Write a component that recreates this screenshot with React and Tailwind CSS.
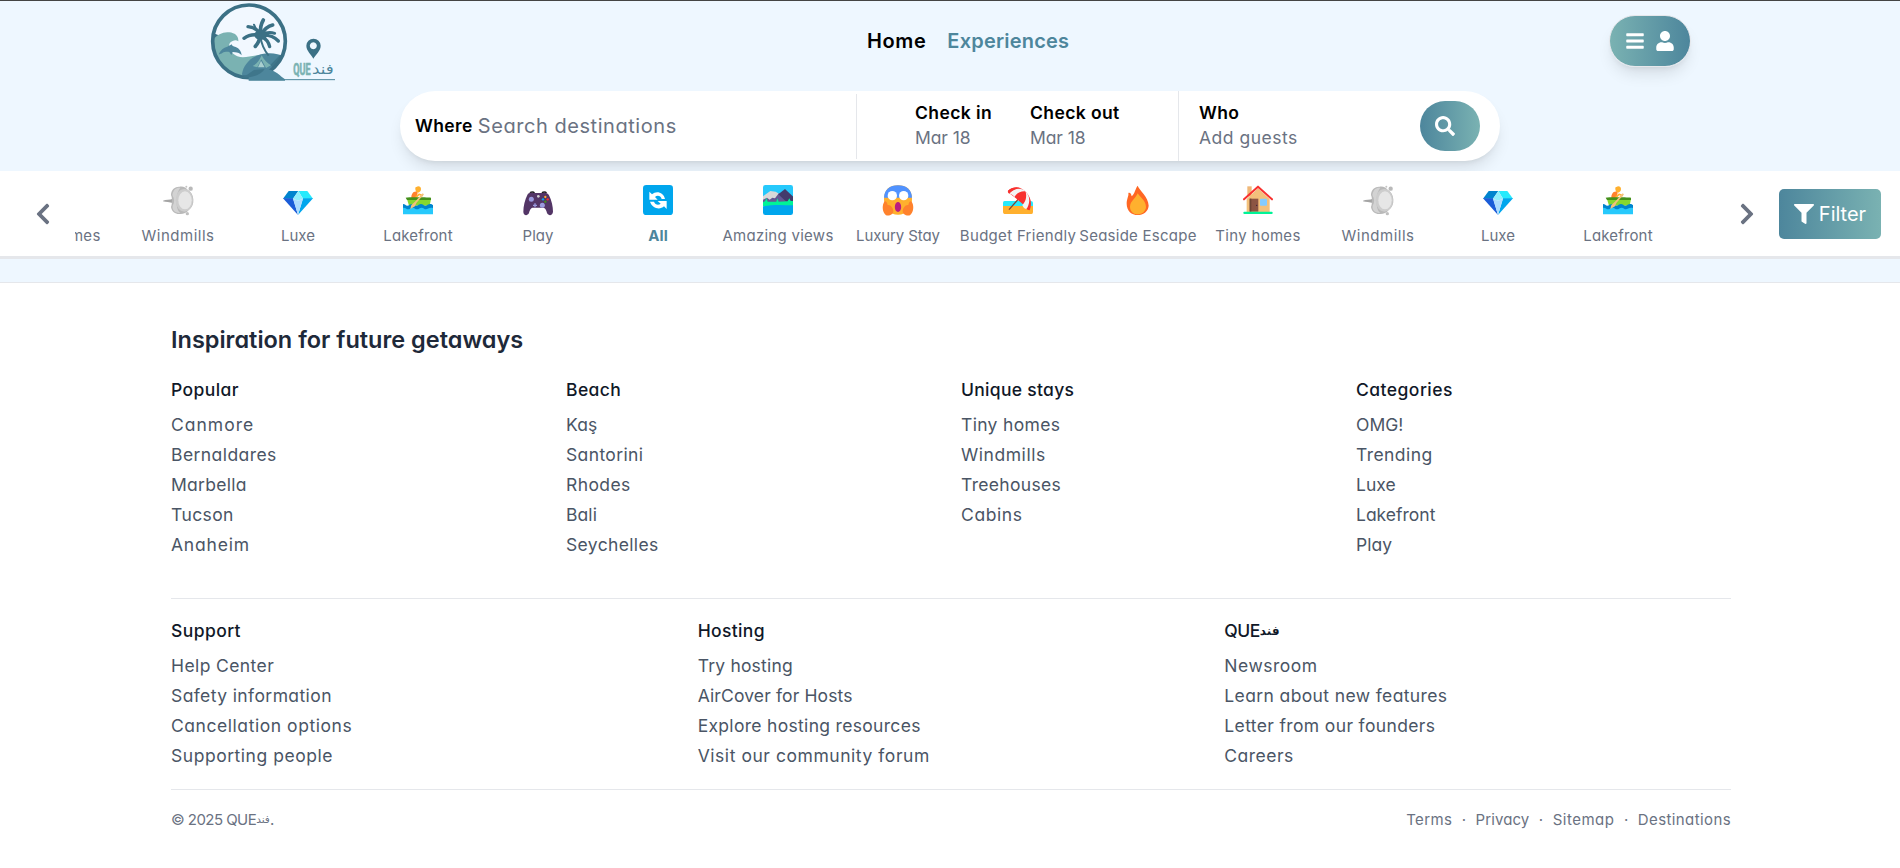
import React from "react";
import { FaBars, FaUser, FaSearch, FaFilter, FaChevronLeft, FaChevronRight } from "react-icons/fa";

function Logo() {
  return (
    <svg viewBox="0 0 510 270" className="h-[90px] w-[170px] shrink-0">
      <defs>
        <clipPath id="disc">
          <circle cx="177" cy="124" r="108" />
        </clipPath>
      </defs>
      <circle cx="177" cy="124" r="108" fill="#f2f8ff" />
      <g clipPath="url(#disc)">
        <path d="M60 96 L90 107 L64 134Z" fill="#3b7085" />
        <path
          d="M60 130 C75 108 95 94 118 97 C135 99 146 108 145 124 C138 118 128 121 120 128 C112 140 122 160 142 169 C166 178 195 162 225 166 L260 200 L230 240 L130 240 L60 190Z"
          fill="#7ab2b2"
        />
        <path
          d="M156 222 C160 196 180 172 212 163 C240 156 268 160 292 174 L280 210 L240 244 L160 240Z"
          fill="#4d869c"
        />
        <path d="M240 196 L270 165 L290 180 L262 212Z" fill="#3f768b" />
        <path d="M215 166 C222 180 232 190 243 196 L228 204 L214 178 L202 202 L188 198 C200 192 208 182 215 166Z" fill="#7ab2b2" />
        <path d="M213 182 L224 202 L204 202Z" fill="#a9cfcf" />
      </g>
      <circle cx="177" cy="124" r="109" fill="none" stroke="#3b7085" strokeWidth="11" />
      <path
        d="M86 163 C92 150 100 143 112 140 C117 138 120 136 125 133 C126 138 130 139 137 141 C148 145 154 154 155 166 C150 160 143 157 135 157 L128 156 L124 165 L118 156 C110 155 102 156 98 158 C94 161 90 162 86 163Z"
        fill="#4d869c"
      />
      <path d="M211 108 C214 133 222 150 236 167" fill="none" stroke="#3b7085" strokeWidth="6" />
      <g fill="none" stroke="#3b7085" strokeLinecap="round">
        <path d="M211 102 C202 88 190 81 174 80" strokeWidth="10" />
        <path d="M212 100 C210 84 213 72 220 60" strokeWidth="11" />
        <path d="M214 102 C224 86 236 78 248 75" strokeWidth="11" />
        <path d="M214 104 C228 97 242 96 254 100" strokeWidth="9" />
        <path d="M214 106 C234 104 254 112 265 123" strokeWidth="10" />
        <path d="M213 108 C228 116 236 126 239 140" strokeWidth="10" />
        <path d="M210 108 C208 122 203 132 196 139" strokeWidth="11" />
        <path d="M209 106 C192 102 174 106 162 115" strokeWidth="10" />
        <path d="M210 100 C200 94 196 84 192 74" strokeWidth="6" />
      </g>
      <ellipse cx="212" cy="105" rx="19" ry="15" fill="#3b7085" />
      <path d="M176 238 C176 226 180 216 192 210 C218 202 246 206 262 220 C272 228 278 233 285 238 L285 242 L176 242Z" fill="#4d869c" />
      <path d="M150 234 C178 236 214 226 224 207 L192 210 C178 220 168 228 150 234Z" fill="#3f768b" />
      <path d="M178 239 H435" stroke="#4d869c" strokeWidth="3" />
      <path
        fillRule="evenodd"
        d="M370 176 C364 163 349 153 349 137 A21.500 21 0 0 1 392 137 C392 153 377 163 370 176Z M370 127 a10.500 10.500 0 1 0 0.010 0Z"
        fill="#3b7085"
      />
      <text
        x="310"
        y="225"
        textLength="52"
        lengthAdjust="spacingAndGlyphs"
        fill="#7ab2b2"
        stroke="#7ab2b2"
        strokeWidth="2"
        className="font-['Roboto','Liberation_Sans',sans-serif] text-[49px] font-bold"
      >
        QUE
      </text>
      <text
        x="366"
        y="222"
        textLength="65"
        lengthAdjust="spacingAndGlyphs"
        fill="#4d869c"
        className="font-['DejaVu_Sans',sans-serif] text-[44px]"
      >
        فند
      </text>
    </svg>
  );
}

function Wind() {
  return (
    <>
      <path d="M0 47 C8 43 20 45 30 41 V54 C20 52 8 51 0 49Z" fill="#a5a5a5" />
      <path d="M24 30 C24 12 38 4 50 5 C60 3 70 8 75 16 C94 24 98 62 78 74 C70 84 60 88 50 87 C38 88 26 80 24 66 C28 58 28 38 24 30Z" fill="#b9b9b9" />
      <path d="M28 30 C32 12 42 7 52 9 C40 20 34 70 52 84 C38 84 26 76 29 62 C35 52 35 42 28 30Z" fill="#d3d3d3" />
      <ellipse cx="64" cy="46" rx="26" ry="34" fill="#cdcdcd" />
      <ellipse cx="66" cy="46" rx="20" ry="27" fill="#e6e6e6" />
      <circle cx="83" cy="11" r="6.500" fill="#b9b9b9" />
      <circle cx="70" cy="5" r="3" fill="#c5c5c5" />
      <circle cx="73" cy="86" r="5" fill="#c0c0c0" />
    </>
  );
}

function Gem() {
  return (
    <>
      <path d="M17 18 H46 L30 41 H0Z" fill="#0084ce" />
      <path d="M46 18 H73 L90 41 H60Z" fill="#26eafc" />
      <path d="M0 40 H30 L45 90Z" fill="#1b5cd8" />
      <path d="M90 40 H60 L45 90Z" fill="#00a6ed" />
      <path d="M46 18 L60 41 L45 47 L30 41Z" fill="#8feffc" />
      <path d="M30 41 L45 47 L60 41 L45 90Z" fill="#aedcff" />
    </>
  );
}

function Rower() {
  return (
    <>
      <path d="M40 20 C36 14 36 4 40 6 C46 2 54 4 54 12 C54 18 50 23 45 23Z" fill="#ffb02e" />
      <path d="M25 40 C24 26 32 17 42 20 C46 24 42 32 38 40Z" fill="#ff822d" />
      <path d="M38 38 L48 28 L60 32" stroke="#ffb02e" strokeWidth="5" fill="none" strokeLinejoin="round" />
      <path d="M12 42 H84 L80 62 H18Z" fill="#86d72f" />
      <path d="M8 38 C20 36 70 37 84 38 V45 H12Z" fill="#44911b" />
      <path d="M0 57 C6 57 8 62 13 62 S22 57 27 57 35 62 40 62 49 57 54 57 62 62 67 62 76 57 81 57 87 59 90 60 V75 H0Z" fill="#0084ce" />
      <path d="M0 68 C8 67 10 73 15 73 S24 68 29 68 37 73 42 73 51 68 56 68 64 73 69 73 78 66 90 69 V88 H0Z" fill="#26c9fc" />
      <path d="M63 28 L40 54 L36 64 L22 72 L25 60 L36 50 L59 25Z" fill="#f3c07b" />
    </>
  );
}

function Pad() {
  return (
    <>
      <path d="M22 24 C22 20 32 20 34 24 M58 24 C58 20 68 20 70 24" stroke="#1c1c1c" strokeWidth="5" fill="none" />
      <path d="M13 30 C16 22 26 23 32 24 H60 C68 22 75 24 78 31 C86 46 90 66 90 80 C89 92 77 94 72 84 C70 76 68 70 62 68 H28 C22 70 20 76 18 84 C13 94 1 92 1 80 C1 64 6 44 13 30Z" fill="#533566" />
      <circle cx="25" cy="43" r="7.500" fill="#9b9ade" />
      <circle cx="58" cy="61" r="7.500" fill="#9b9ade" />
      <path d="M36 55 V67 M30 61 H42" stroke="#9b9ade" strokeWidth="4" />
      <circle cx="46" cy="34" r="4" fill="#d3d3d3" />
      <circle cx="67" cy="36" r="3.500" fill="#ffb02e" />
      <circle cx="74" cy="43" r="3.500" fill="#f8312f" />
      <circle cx="60" cy="43" r="3.500" fill="#00a6ed" />
      <circle cx="67" cy="50" r="3.500" fill="#44911b" />
    </>
  );
}

function Arrows() {
  return (
    <>
      <rect width="90" height="90" rx="10" fill="#00a6ed" />
      <path d="M19 20 L27 28 C40 16 62 22 66 42 H56 C53 31 42 30 36 36 L44 44 H19Z" fill="#fff" />
      <path d="M71 72 L63 64 C50 76 28 70 21 50 H33 C36 60 47 61 53 56 L44 48 H71Z" fill="#fff" />
    </>
  );
}

function Park() {
  return (
    <>
      <clipPath id="park">
        <rect width="90" height="90" rx="7" />
      </clipPath>
      <g clipPath="url(#park)">
        <rect width="90" height="60" fill="#26c9fc" />
        <path d="M0 34 L22 18 L38 20 L54 30 V55 H0Z" fill="#d9d9d9" />
        <path d="M0 44 L12 38 L20 44 L28 38 L36 40 L48 24 L78 55 H0Z" fill="#635994" />
        <path d="M66 12 L92 36 V50 H70 L46 28Z" fill="#433b6b" />
        <path d="M0 52 L7 48 L10 38 L14 50 L40 50 L43 40 L47 50 L74 49 L79 40 L83 48 H90 V64 H0Z" fill="#00f397" />
        <path d="M0 64 C30 58 60 60 90 61 V90 H0Z" fill="#00a6ed" />
      </g>
    </>
  );
}

function Scream() {
  return (
    <>
      <path d="M3 42 C3 14 20 1 45 1 C70 1 87 14 87 42 C87 72 70 89 45 89 S3 72 3 42Z" fill="#ffb02e" />
      <path d="M3 38 C4 14 20 1 45 1 S86 14 87 38Z" fill="#5092ff" />
      <circle cx="28" cy="32" r="14" fill="#fff" />
      <circle cx="62" cy="32" r="14" fill="#fff" />
      <ellipse cx="45" cy="66" rx="9.500" ry="15" fill="#bb1d80" />
      <path d="M2 54 C6 44 12 50 14 60 C22 58 30 68 31 78 C31 88 20 94 9 91 C-2 82 -3 64 2 54Z" fill="#ff822d" />
      <path d="M88 54 C84 44 78 50 76 60 C68 58 60 68 59 78 C59 88 70 94 81 91 C92 82 93 64 88 54Z" fill="#ff822d" />
    </>
  );
}

function Beach() {
  return (
    <>
      <path d="M0 54 C0 49 3 48 8 48 H82 C88 48 90 50 90 56 V66 H0Z" fill="#26eafc" />
      <path d="M0 63 H90 V80 C90 86 87 87 82 87 H8 C2 87 0 85 0 80Z" fill="#ffb02e" />
      <path d="M50 38 L18 74" stroke="#7d4533" strokeWidth="4" />
      <path d="M15 17 C32 2 54 6 68 20 C84 36 88 56 80 76 C76 76 72 73 68 70 L60 58 L34 36 L18 24Z" fill="#f8312f" />
      <path d="M67 19 C50 4 30 14 17 25 C22 26 30 30 34 36 C42 24 52 18 67 19Z" fill="#f4f4f4" />
      <path d="M15 17 C28 6 42 5 52 9 C38 10 26 18 19 26 C15 24 14 20 15 17Z" fill="#f8312f" />
      <path d="M68 20 C84 34 80 60 70 72 C66 72 60 68 58 60 C68 50 72 36 68 20Z" fill="#f4f4f4" />
    </>
  );
}

function Fire() {
  return (
    <>
      <path d="M44 2 C50 18 76 34 77 62 C76 80 60 90 44 90 C26 90 11 78 11 56 C11 42 18 32 16 24 C22 22 25 28 26 34 C36 26 36 12 44 2Z" fill="#ff6723" />
      <path d="M44 25 C52 38 68 46 69 66 C68 80 56 88 45 88 C32 88 21 80 21 65 C22 48 38 40 44 25Z" fill="#ffb02e" />
    </>
  );
}

function House() {
  return (
    <>
      <rect x="13" y="4" width="13" height="30" fill="#f0b878" />
      <path d="M45 10 L80 42 V82 H11 V42Z" fill="#f3c07b" />
      <path d="M3 43 L45 5 L87 43" fill="none" stroke="#f8312f" strokeWidth="6" strokeLinecap="round" strokeLinejoin="round" />
      <rect x="20" y="41" width="26" height="39" fill="#8c5543" />
      <rect x="20" y="41" width="5" height="39" fill="#6d4534" />
      <circle cx="41" cy="61" r="2" fill="#321b41" />
      <rect x="51" y="41" width="21" height="21" rx="2" fill="#83cbff" />
      <rect x="1" y="80" width="88" height="7" rx="3" fill="#00f397" />
    </>
  );
}

const categories = [
  ["Tiny homes", House, "tracking-[0.3px]"],
  ["Windmills", Wind, "tracking-[0.5px]"],
  ["Luxe", Gem, ""],
  ["Lakefront", Rower, "tracking-[0.15px]"],
  ["Play", Pad, ""],
  ["All", Arrows, "tracking-[0.1px]"],
  ["Amazing views", Park, "tracking-[0.28px]"],
  ["Luxury Stay", Scream, "tracking-[-0.1px]"],
  ["Budget Friendly", Beach, "tracking-[0.3px]"],
  ["Seaside Escape", Fire, "tracking-[0.25px]"],
  ["Tiny homes", House, "tracking-[0.3px]"],
  ["Windmills", Wind, "tracking-[0.5px]"],
  ["Luxe", Gem, ""],
  ["Lakefront", Rower, "tracking-[0.15px]"],
];

const getaways = [
  {
    title: ["Popular", "tracking-[0.43px]"],
    links: [
      ["Canmore", "tracking-[1px]"],
      ["Bernaldares", "tracking-[0.43px]"],
      ["Marbella", "tracking-[0.27px]"],
      ["Tucson", "tracking-[0.4px]"],
      ["Anaheim", "tracking-[0.8px]"],
    ],
  },
  {
    title: ["Beach", "tracking-[0.4px]"],
    links: [
      ["Kaş", "tracking-[0.1px]"],
      ["Santorini", "tracking-[0.37px]"],
      ["Rhodes", "tracking-[0.4px]"],
      ["Bali", "tracking-[0.1px]"],
      ["Seychelles", "tracking-[0.35px]"],
    ],
  },
  {
    title: ["Unique stays", "tracking-[0.3px]"],
    links: [
      ["Tiny homes", "tracking-[0.33px]"],
      ["Windmills", "tracking-[0.55px]"],
      ["Treehouses", "tracking-[0.33px]"],
      ["Cabins", "tracking-[0.6px]"],
    ],
  },
  {
    title: ["Categories", "tracking-[0.46px]"],
    links: [
      ["OMG!", ""],
      ["Trending", "tracking-[0.43px]"],
      ["Luxe", ""],
      ["Lakefront", ""],
      ["Play", ""],
    ],
  },
];

const Brand = ({ className }) => (
  <>
    QUE<span className={className}>فند</span>
  </>
);

const company = [
  {
    title: ["Support", "tracking-[0.42px]"],
    links: [
      ["Help Center", "tracking-[0.4px]"],
      ["Safety information", "tracking-[0.4px]"],
      ["Cancellation options", "tracking-[0.55px]"],
      ["Supporting people", "tracking-[0.53px]"],
    ],
  },
  {
    title: ["Hosting", "tracking-[0.35px]"],
    links: [
      ["Try hosting", "tracking-[0.2px]"],
      ["AirCover for Hosts", "tracking-[0.13px]"],
      ["Explore hosting resources", "tracking-[0.31px]"],
      ["Visit our community forum", "tracking-[0.55px]"],
    ],
  },
  {
    title: [
      <Brand
        key="brand"
        className="align-[2px] font-['DejaVu_Sans',sans-serif] text-[12px] leading-none font-bold tracking-normal"
      />,
      "tracking-[-0.5px]",
    ],
    links: [
      ["Newsroom", "tracking-[0.5px]"],
      ["Learn about new features", "tracking-[0.38px]"],
      ["Letter from our founders", "tracking-[0.36px]"],
      ["Careers", "tracking-[0.5px]"],
    ],
  },
];

function LinkColumn({ title, links }) {
  return (
    <div>
      <h3 className={"h-[30px] text-[17.5px] leading-[30px] font-medium text-gray-900 " + title[1]}>{title[0]}</h3>
      <ul className="mt-[5px] text-[17.5px] leading-[30px] text-gray-600">
        {links.map(([label, tracking]) => (
          <li key={label} className={"h-[30px] " + tracking}>
            {label}
          </li>
        ))}
      </ul>
    </div>
  );
}

export default function App() {
  return (
    <div className="h-[868px] w-[1900px] overflow-hidden bg-white font-['Inter','Open_Sans',sans-serif] [font-feature-settings:'cv11']">
      <header className="h-[171px] border-t border-[#444] bg-[#eef7ff]">
        <div className="-mt-px flex h-[91px] items-start pl-[190px]">
          <Logo />
          <nav className="ml-[507px] flex gap-[21px] pt-[26px] text-[20px] leading-[30px] font-semibold">
            <a className="tracking-[0.6px] text-black">Home</a>
            <a className="tracking-[0.2px] text-[#4d869c]">Experiences</a>
          </nav>
          <button className="mt-[15px] mr-[209px] ml-auto flex h-[52px] w-[82px] items-center justify-center gap-[10px] rounded-full border border-gray-200 bg-linear-to-r from-[#7ab2b2] to-[#4d869c] text-white shadow-lg">
            <FaBars className="size-5" />
            <FaUser className="size-5" />
          </button>
        </div>
        <div className="mx-auto flex h-[70px] w-[1100px] items-center rounded-full bg-white shadow-lg">
          <div className="flex h-[65px] w-[457px] items-center gap-[5px] border-r border-gray-200 pl-[15px]">
            <span className="text-[17.5px] font-semibold tracking-[0.4px] text-black">Where</span>
            <span className="text-[20px] tracking-[0.55px] text-gray-500">Search destinations</span>
          </div>
          <div className="flex h-full w-[322px] gap-[38px] border-r border-gray-200 pt-[9px] pl-[58px] text-[17.5px] leading-[25px]">
            <div>
              <p className="font-semibold tracking-[0.4px] text-black">Check in</p>
              <p className="tracking-[-0.1px] text-gray-500">Mar 18</p>
            </div>
            <div>
              <p className="font-semibold tracking-[0.4px] text-black">Check out</p>
              <p className="tracking-[-0.1px] text-gray-500">Mar 18</p>
            </div>
          </div>
          <div className="h-full pt-[9px] pl-5 text-[17.5px] leading-[25px]">
            <p className="font-semibold tracking-[0.4px] text-black">Who</p>
            <p className="tracking-[0.5px] text-gray-500">Add guests</p>
          </div>
          <button className="mr-5 ml-auto flex h-[50px] w-[60px] items-center rounded-full bg-linear-to-r from-[#4d869c] to-[#7ab2b2] pl-[15px] text-white">
            <FaSearch className="size-5" />
          </button>
        </div>
      </header>

      <section className="flex h-[88px] items-center border-b-[3px] border-gray-200 bg-white">
        <div className="flex w-[75px] shrink-0 items-center pl-[31px] text-gray-500">
          <FaChevronLeft className="size-6" />
        </div>
        <div className="flex h-full w-[1640px] overflow-hidden">
          {categories.map(([name, Art, tracking], i) => (
            <div key={i} className={"flex w-[120px] shrink-0 flex-col items-center pt-[14px] " + (i === 0 ? "-ml-[77px]" : "")}>
              <svg viewBox="0 0 90 90" className="size-[30px] overflow-visible">
                <Art />
              </svg>
              <span
                className={
                  "mt-[9px] text-[15px] leading-6 whitespace-nowrap " +
                  tracking +
                  (name === "All" ? " font-bold text-[#4d869c]" : " text-gray-500")
                }
              >
                {name}
              </span>
            </div>
          ))}
        </div>
        <FaChevronRight className="ml-5 size-6 text-gray-500" />
        <button className="mr-[19px] ml-auto flex h-[50px] w-[102px] items-center justify-center gap-[5px] rounded-[5px] bg-linear-to-r from-[#4d869c] to-[#7ab2b2] text-[20px] text-white">
          <FaFilter className="size-5" />
          Filter
        </button>
      </section>

      <div className="h-6 border-b border-gray-200 bg-[#eef7ff]" />

      <footer className="ml-[171px] w-[1560px] pt-[41px]">
        <h2 className="text-[23.5px] leading-[32px] font-semibold text-gray-800">Inspiration for future getaways</h2>
        <div className="mt-[19px] grid h-[224px] grid-cols-4 gap-5 border-b border-gray-200">
          {getaways.map((c, i) => (
            <LinkColumn key={i} {...c} />
          ))}
        </div>
        <div className="grid h-[191px] grid-cols-3 gap-5 border-b border-gray-200 pt-[17px]">
          {company.map((c, i) => (
            <LinkColumn key={i} {...c} />
          ))}
        </div>
        <div className="flex justify-between pt-[18px] text-[15px] leading-6 text-gray-500">
          <p className="tracking-[-0.55px]">
            © 2025 <Brand className="align-[2px] font-['DejaVu_Sans',sans-serif] text-[10.5px] leading-none tracking-normal" />.
          </p>
          <div className="flex gap-[9.5px]">
            <a className="tracking-[0.35px]">Terms</a>
            <span>·</span>
            <a className="tracking-[0.1px]">Privacy</a>
            <span>·</span>
            <a className="tracking-[0.5px]">Sitemap</a>
            <span>·</span>
            <a className="tracking-[0.4px]">Destinations</a>
          </div>
        </div>
      </footer>
    </div>
  );
}
